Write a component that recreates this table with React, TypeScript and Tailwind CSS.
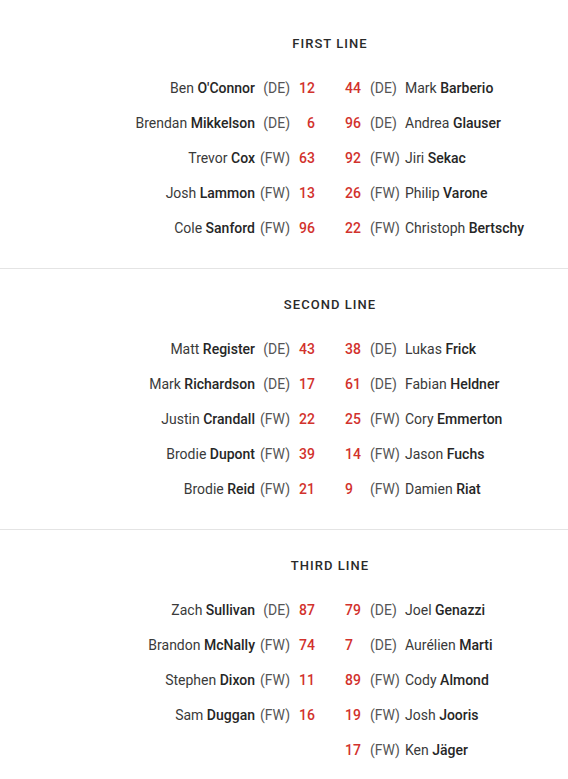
type Player = { num: number; pos: string; first: string; last: string }
type Line = { title: string; home: Player[]; away: Player[] }

const lines: Line[] = [
  {
    title: 'FIRST LINE',
    home: [
      { num: 12, pos: 'DE', first: 'Ben', last: "O'Connor" },
      { num: 6, pos: 'DE', first: 'Brendan', last: 'Mikkelson' },
      { num: 63, pos: 'FW', first: 'Trevor', last: 'Cox' },
      { num: 13, pos: 'FW', first: 'Josh', last: 'Lammon' },
      { num: 96, pos: 'FW', first: 'Cole', last: 'Sanford' },
    ],
    away: [
      { num: 44, pos: 'DE', first: 'Mark', last: 'Barberio' },
      { num: 96, pos: 'DE', first: 'Andrea', last: 'Glauser' },
      { num: 92, pos: 'FW', first: 'Jiri', last: 'Sekac' },
      { num: 26, pos: 'FW', first: 'Philip', last: 'Varone' },
      { num: 22, pos: 'FW', first: 'Christoph', last: 'Bertschy' },
    ],
  },
  {
    title: 'SECOND LINE',
    home: [
      { num: 43, pos: 'DE', first: 'Matt', last: 'Register' },
      { num: 17, pos: 'DE', first: 'Mark', last: 'Richardson' },
      { num: 22, pos: 'FW', first: 'Justin', last: 'Crandall' },
      { num: 39, pos: 'FW', first: 'Brodie', last: 'Dupont' },
      { num: 21, pos: 'FW', first: 'Brodie', last: 'Reid' },
    ],
    away: [
      { num: 38, pos: 'DE', first: 'Lukas', last: 'Frick' },
      { num: 61, pos: 'DE', first: 'Fabian', last: 'Heldner' },
      { num: 25, pos: 'FW', first: 'Cory', last: 'Emmerton' },
      { num: 14, pos: 'FW', first: 'Jason', last: 'Fuchs' },
      { num: 9, pos: 'FW', first: 'Damien', last: 'Riat' },
    ],
  },
  {
    title: 'THIRD LINE',
    home: [
      { num: 87, pos: 'DE', first: 'Zach', last: 'Sullivan' },
      { num: 74, pos: 'FW', first: 'Brandon', last: 'McNally' },
      { num: 11, pos: 'FW', first: 'Stephen', last: 'Dixon' },
      { num: 16, pos: 'FW', first: 'Sam', last: 'Duggan' },
    ],
    away: [
      { num: 79, pos: 'DE', first: 'Joel', last: 'Genazzi' },
      { num: 7, pos: 'DE', first: 'Aurélien', last: 'Marti' },
      { num: 89, pos: 'FW', first: 'Cody', last: 'Almond' },
      { num: 19, pos: 'FW', first: 'Josh', last: 'Jooris' },
      { num: 17, pos: 'FW', first: 'Ken', last: 'Jäger' },
    ],
  },
]

function HomeCell({ p }: { p?: Player }) {
  if (!p) return <div />
  return (
    <div className="flex items-center justify-end pr-[15px]">
      <span className="whitespace-nowrap text-[#3a3a3a]">
        {p.first} <span className="font-medium text-[#262626]">{p.last}</span>
      </span>
      <span className="w-[35px] text-right text-[#555]">({p.pos})</span>
      <span className="w-[25px] text-right font-medium text-[#d2322d]">{p.num}</span>
    </div>
  )
}

function AwayCell({ p }: { p?: Player }) {
  if (!p) return <div />
  return (
    <div className="flex items-center pl-[15px]">
      <span className="w-[25px] font-medium text-[#d2322d]">{p.num}</span>
      <span className="w-[35px] text-[#555]">({p.pos})</span>
      <span className="whitespace-nowrap text-[#3a3a3a]">
        {p.first} <span className="font-medium text-[#262626]">{p.last}</span>
      </span>
    </div>
  )
}

function LineBlock({ line }: { line: Line }) {
  const rows = Math.max(line.home.length, line.away.length)
  return (
    <section className="border-b border-[#e4e4e4] pb-[22px] pt-[26px]">
      <h3 className="h-[20px] pl-[92px] text-center text-[13px] font-medium leading-[20px] tracking-[0.08em] text-[#2a2a2a]">
        {line.title}
      </h3>
      <div className="pt-[17px]">
        {Array.from({ length: rows }, (_, i) => (
          <div key={i} className="grid h-[35px] grid-cols-2 pl-[92px] text-[14px]">
            <HomeCell p={line.home[i]} />
            <AwayCell p={line.away[i]} />
          </div>
        ))}
      </div>
    </section>
  )
}

export default function App() {
  return (
    <div className="min-h-screen bg-white pt-[8px] font-['Roboto','Noto_Sans',sans-serif]">
      {lines.map((l) => (
        <LineBlock key={l.title} line={l} />
      ))}
    </div>
  )
}
